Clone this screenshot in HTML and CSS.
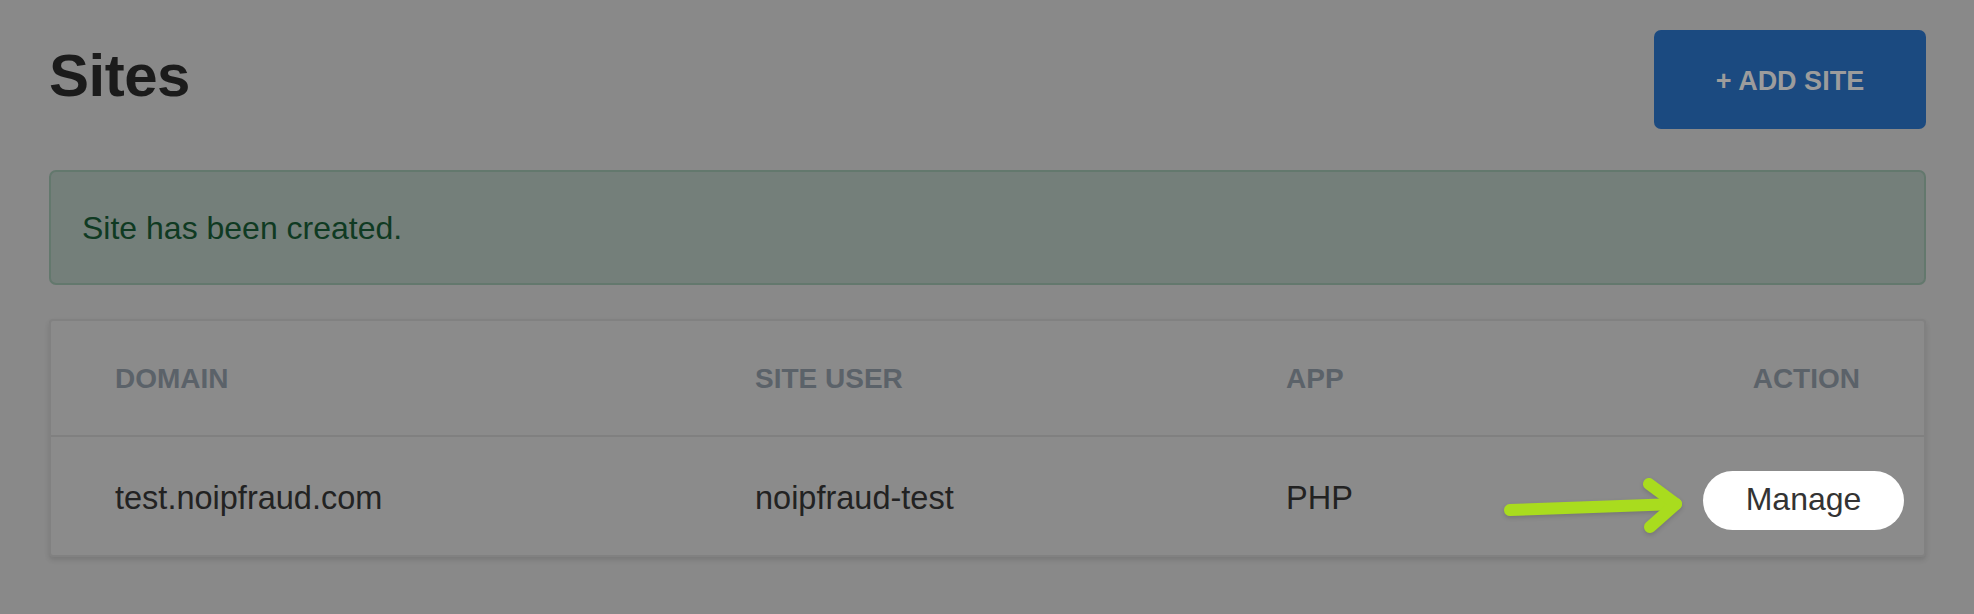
FILE: index.html
```html
<!DOCTYPE html>
<html lang="en">
<head>
<meta charset="utf-8">
<title>Sites</title>
<link rel="stylesheet" href="styles.css">
</head>
<body>
<main class="page">
  <header class="page-head">
    <h1 class="title">Sites</h1>
    <button class="btn-add">+ ADD SITE</button>
  </header>
  <div class="alert">Site has been created.</div>
  <section class="card">
    <div class="row row-head">
      <div class="cell">DOMAIN</div>
      <div class="cell">SITE USER</div>
      <div class="cell">APP</div>
      <div class="cell cell-right">ACTION</div>
    </div>
    <div class="row row-body">
      <div class="cell">test.noipfraud.com</div>
      <div class="cell">noipfraud-test</div>
      <div class="cell">PHP</div>
      <div class="cell cell-right cell-action"><button class="btn-manage">Manage</button></div>
      <svg class="arrow" width="190" height="60" viewBox="0 0 190 60" aria-hidden="true">
        <g fill="none" stroke="#a9dc1e" stroke-width="12" stroke-linecap="round" stroke-linejoin="round">
          <path d="M10 34 L176 28"/>
          <path d="M149 8 L176 28 L150 51"/>
        </g>
      </svg>
    </div>
  </section>
</main>
</body>
</html>
```
FILE: styles.css
```css
* { box-sizing: border-box; }
html, body { margin: 0; padding: 0; }
body {
  background: #898989;
  font-family: "Liberation Sans", Arial, Helvetica, sans-serif;
  width: 1974px;
  height: 614px;
  overflow: hidden;
}
.page {
  padding: 30px 48px 0 49px;
}
.page-head {
  display: flex;
  justify-content: space-between;
  align-items: center;
  height: 99px;
}
.title {
  margin: 0 0 8px 0;
  font-size: 60px;
  line-height: 72px;
  font-weight: bold;
  color: #1b1b1b;
  letter-spacing: -0.5px;
}
.btn-add {
  width: 272px;
  height: 99px;
  border: none;
  border-radius: 7px;
  background: #1b4a80;
  color: #9c9c9c;
  font-family: inherit;
  font-size: 27px;
  font-weight: bold;
  padding: 4px 0 0 0;
  margin: 0;
}
.alert {
  margin-top: 41px;
  height: 115px;
  border: 2px solid #63786d;
  border-radius: 7px;
  background: #747f7a;
  color: #0f3a22;
  font-size: 32px;
  line-height: 48px;
  padding: 32px 31px;
}
.card {
  margin-top: 34px;
  border: 2px solid #818181;
  border-radius: 4px;
  background: #8b8b8b;
  box-shadow: 0 3px 5px rgba(0, 0, 0, 0.12);
}
.row {
  display: grid;
  grid-template-columns: 640px 531px 300px 1fr;
  align-items: center;
}
.row-head {
  height: 116px;
  border-bottom: 2px solid #808080;
  font-size: 28px;
  font-weight: bold;
  color: #5b6269;
}
.row-head .cell { padding-top: 2px; }
.row-body {
  position: relative;
  height: 118px;
  font-size: 32.5px;
  color: #222;
}
.row-body .cell { padding-top: 4px; }
.cell {
  padding-left: 64px;
  line-height: 48px;
  white-space: nowrap;
}
.cell-right {
  text-align: right;
  padding-left: 0;
  padding-right: 64px;
}
.row-body .cell-action {
  padding-top: 9px;
  padding-right: 20px;
  display: flex;
  justify-content: flex-end;
}
.btn-manage {
  width: 201px;
  height: 59px;
  border: none;
  border-radius: 30px;
  background: #ffffff;
  color: #333333;
  font-family: inherit;
  font-size: 32px;
  line-height: 57px;
  padding: 0 0 2px 0;
  margin: 0;
}
.arrow {
  position: absolute;
  left: 1449px;
  top: 39px;
  filter: drop-shadow(0 2px 2px rgba(0, 0, 0, 0.15));
}
```
